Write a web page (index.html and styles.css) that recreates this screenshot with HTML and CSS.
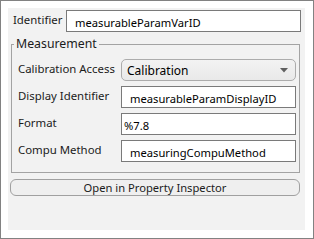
FILE: index.html
```html
<!DOCTYPE html>
<html lang="en">

<head>
    <meta charset="UTF-8" />
    <title>Measurement Properties</title>
    <link rel="stylesheet" href="styles.css">
</head>

<body>
    <div class="panel">
        <div class="id-row">
            <span class="id-label">Identifier</span>
            <div class="textbox id-box">measurableParamVarID</div>
        </div>

        <fieldset class="group">
            <legend>Measurement</legend>
            <div class="fields">
                <span class="lbl">Calibration Access</span>
                <div class="combo">
                    <span>Calibration</span>
                    <svg class="arrow" width="8" height="5" viewBox="0 0 8 5">
                        <path d="M0 0 L8 0 L4 4.5 Z" fill="#5f5f5f" />
                    </svg>
                </div>

                <span class="lbl">Display Identifier</span>
                <div class="textbox">measurableParamDisplayID</div>

                <span class="lbl">Format</span>
                <div class="textbox tight">%7.8</div>

                <span class="lbl">Compu Method</span>
                <div class="textbox">measuringCompuMethod</div>
            </div>
        </fieldset>

        <button class="btn-inspect">Open in Property Inspector</button>
    </div>
</body>

</html>
```

FILE: styles.css
```css
* {
    box-sizing: border-box;
}

html,
body {
    margin: 0;
    height: 100%;
}

body {
    background: #ffffff;
    border: 1px solid #828282;
    padding: 7px 8px 8px 7px;
    font-family: "Noto Sans", sans-serif;
    font-size: 11.2px;
    color: #1b1b1b;
}

.panel {
    background: #f2f2f2;
    height: 100%;
    display: flex;
    flex-direction: column;
}

.id-row {
    display: flex;
    align-items: center;
    margin: 2px 4px 0 5px;
}

.id-label {
    flex: 1;
    margin-top: -3px;
    font-size: 11.4px;
}

.textbox {
    height: 22px;
    background: #ffffff;
    border: 1px solid #7a7a7a;
    padding: 4px 0 0 8px;
    color: #000;
    white-space: nowrap;
    overflow: hidden;
}

.textbox.tight {
    padding-left: 2px;
}

.id-box {
    width: 235px;
}

.group {
    margin: 4px 5px 0 3px;
    padding: 0 3px 10px 6px;
    border: 1px solid #a3a3a3;
    min-width: 0;
}

.group legend {
    margin-left: -4px;
    padding: 0 2px;
    font-size: 12.3px;
    line-height: 16px;
}

.fields {
    display: grid;
    grid-template-columns: 1fr 175px;
    row-gap: 5px;
    align-items: center;
    padding-top: 7px;
}

.lbl {
    margin-top: -4px;
    font-size: 11.4px;
}

.combo {
    height: 22px;
    border: 1px solid #acacac;
    border-radius: 5px;
    background: linear-gradient(#f3f3f3, #e9e9e9);
    display: flex;
    align-items: center;
    justify-content: space-between;
    padding: 0 7px 0 5px;
    font-size: 12px;
    color: #000;
}

.arrow {
    margin-top: 1px;
}

.btn-inspect {
    margin: 6px 5px 0 2px;
    height: 17px;
    padding: 0;
    border: 1px solid #a0a0a0;
    border-radius: 6px;
    background: #efefef;
    font-family: inherit;
    font-size: 11.2px;
    color: #1b1b1b;
    line-height: 14px;
}
```
